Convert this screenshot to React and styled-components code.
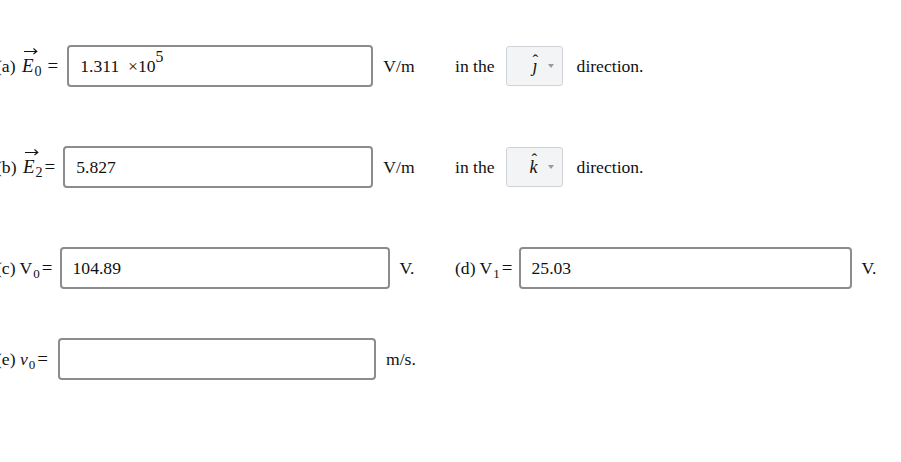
import React from "react";
import styled, { createGlobalStyle } from "styled-components";

const GlobalStyle = createGlobalStyle`
  body {
    margin: 0;
    background: #fff;
    color: #111;
    font-family: "Liberation Serif", "Times New Roman", serif;
    font-size: 17.6px;
  }
`;

const Page = styled.div`
  margin-left: -4px;
  padding-top: 45px;
  display: flex;
  flex-direction: column;
`;

const Row = styled.div`
  display: grid;
  grid-template-columns: 459px auto;
  align-items: center;
  height: 42px;
  margin-bottom: ${(p) => p.gap || 0}px;
`;

const Cell = styled.div`
  display: flex;
  align-items: center;
  white-space: nowrap;
`;

const Label = styled.span`
  margin-right: ${(p) => p.space || 6}px;
  white-space: nowrap;
`;

const Eq = styled.span`
  font-size: 19px;
  margin-left: ${(p) => p.pad || 1}px;
`;

const Field = styled.div`
  box-sizing: border-box;
  width: ${(p) => p.width}px;
  height: 42px;
  border: 2px solid #8c8c8c;
  border-radius: 4px;
  padding: 0 11px;
  display: flex;
  align-items: center;
  background: #fff;
  font-family: "Liberation Serif", "Times New Roman", serif;
  font-size: 17.6px;
`;

const Unit = styled.span`
  margin-left: 10px;
`;

const Sup = styled.span`
  font-size: 0.9em;
  position: relative;
  top: -9px;
`;

const Sub = styled.span`
  font-size: 0.74em;
  font-style: normal;
  position: relative;
  top: 4px;
  margin-left: 1px;
`;

const MathE = styled.span`
  position: relative;
  display: inline-block;
  font-style: italic;
  font-size: 19px;
  margin-left: 2px;
`;

const Arrow = styled.svg`
  position: absolute;
  left: 1px;
  top: -8px;
`;

const Select = styled.div`
  box-sizing: border-box;
  width: 57px;
  height: 40px;
  margin: 0 14px 0 11px;
  border: 1px solid #cfd2d6;
  border-radius: 3px;
  background: #f3f4f6;
  display: flex;
  align-items: center;
  justify-content: flex-end;
  padding-right: 8px;
  gap: 10px;
`;

const Hat = styled.span`
  position: relative;
  display: inline-block;
  font-style: italic;
  font-size: 18px;
`;

const HatMark = styled.span`
  position: absolute;
  left: ${(p) => p.left}px;
  top: ${(p) => p.top}px;
  font-style: normal;
  font-size: 17px;
`;

const Caret = styled.span`
  width: 0;
  height: 0;
  border-left: 3.5px solid transparent;
  border-right: 3.5px solid transparent;
  border-top: 4px solid #9a9a9a;
`;

const VecE = ({ sub }) => (
  <MathE>
    <Arrow width="15" height="8" viewBox="0 0 15 8">
      <path d="M1 4.5H13.5M10.5 1.5L13.8 4.5L10.5 7" fill="none" stroke="#111" strokeWidth="1.1" />
    </Arrow>
    E<Sub>{sub}</Sub>
  </MathE>
);

const Direction = ({ glyph, left, top }) => (
  <Cell>
    in the
    <Select>
      <Hat>
        {glyph}
        <HatMark left={left} top={top}>ˆ</HatMark>
      </Hat>
      <Caret />
    </Select>
    direction.
  </Cell>
);

export default function App() {
  return (
    <>
      <GlobalStyle />
      <Page>
        <Row gap={59}>
          <Cell>
            <Label space={9}>
              (a) <VecE sub="0" />
              <Eq pad={6}>=</Eq>
            </Label>
            <Field width={306}>
              1.311&nbsp;&nbsp;×10<Sup>5</Sup>
            </Field>
            <Unit>V/m</Unit>
          </Cell>
          <Direction glyph="ȷ" left={0} top={-5} />
        </Row>
        <Row gap={59}>
          <Cell>
            <Label space={8}>
              (b) <VecE sub="2" />
              <Eq pad={2}>=</Eq>
            </Label>
            <Field width={310}>5.827</Field>
            <Unit>V/m</Unit>
          </Cell>
          <Direction glyph="k" left={2} top={-7} />
        </Row>
        <Row gap={49}>
          <Cell>
            <Label space={7}>
              (c) V<Sub>0</Sub>
              <Eq pad={2}>=</Eq>
            </Label>
            <Field width={330}>104.89</Field>
            <Unit>V.</Unit>
          </Cell>
          <Cell>
            <Label space={6}>
              (d) V<Sub>1</Sub>
              <Eq pad={2}>=</Eq>
            </Label>
            <Field width={333}>25.03</Field>
            <Unit>V.</Unit>
          </Cell>
        </Row>
        <Row>
          <Cell>
            <Label space={10}>
              (e) <i>v</i>
              <Sub>0</Sub>
              <Eq pad={2}>=</Eq>
            </Label>
            <Field width={318} />
            <Unit>m/s.</Unit>
          </Cell>
        </Row>
      </Page>
    </>
  );
}
